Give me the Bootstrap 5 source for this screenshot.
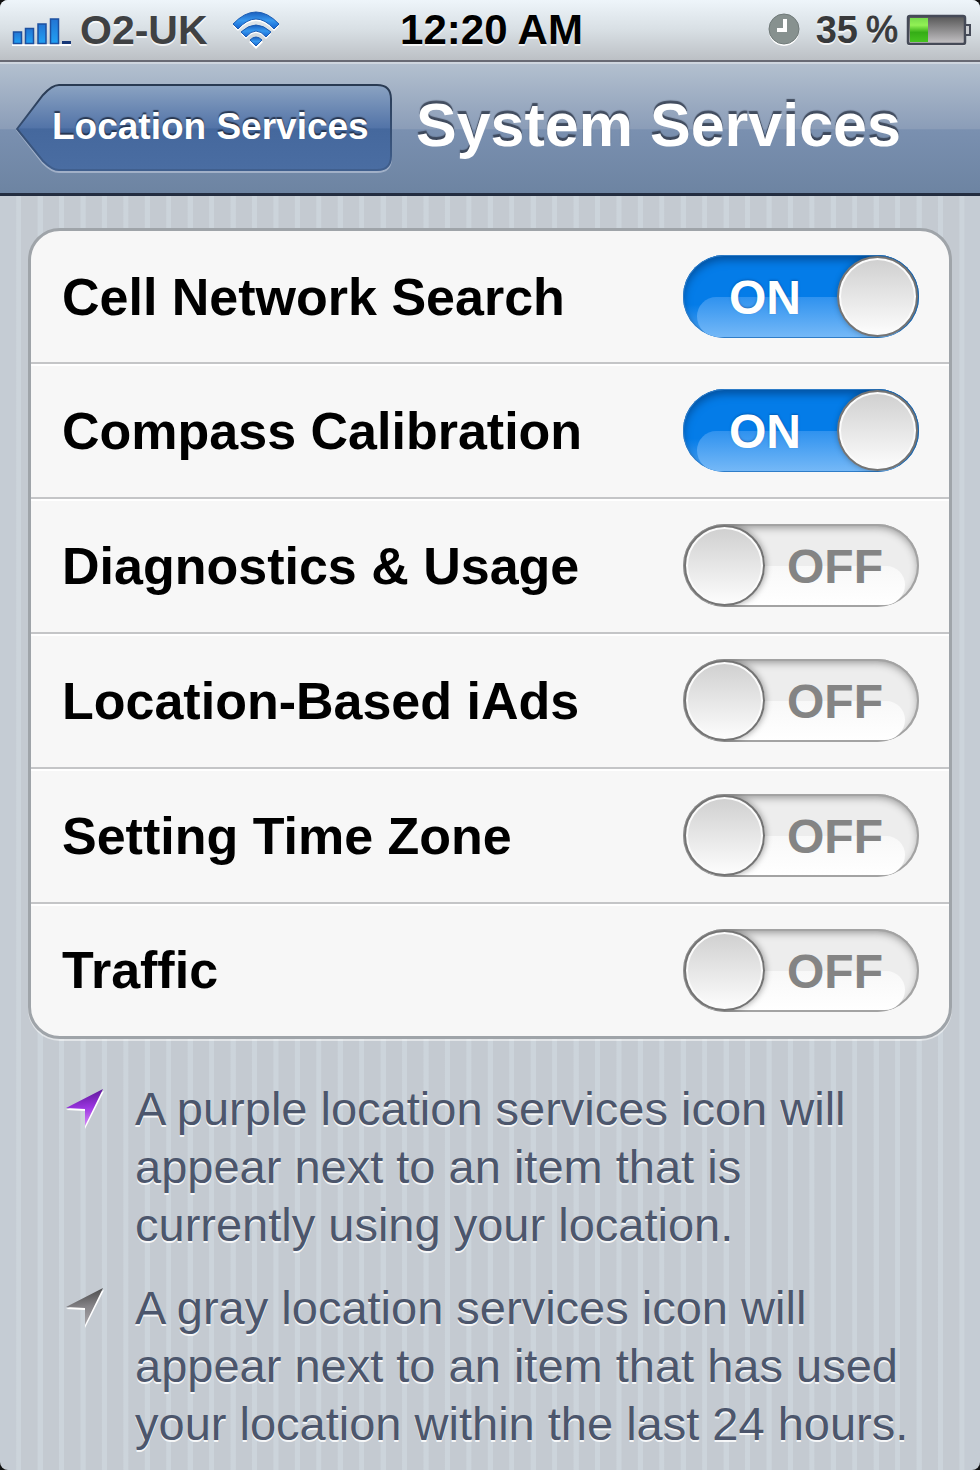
<!DOCTYPE html>
<html lang="en">
<head>
<meta charset="utf-8">
<meta name="viewport" content="width=device-width, initial-scale=1">
<title>System Services</title>
<link rel="stylesheet" href="https://cdn.jsdelivr.net/npm/bootstrap@5.3.0/dist/css/bootstrap.min.css">
<style>
body { background: #111; font-family: "Liberation Sans", Arial, sans-serif; color: #000; }
.screen {
  border-radius: 8px; overflow: hidden;
  background: linear-gradient(90deg, #c5ccd4 16px, transparent 16px calc(100% - 15px), #c5ccd4 calc(100% - 15px)),
    repeating-linear-gradient(90deg, #c4cad1 0 1.6%, #ccd4db 1.7% 2.15%, #c4cad1 2.1875%);
}
.status-bar {
  height: 62px; padding: 0 9px 0 12px; font-weight: 700; line-height: 62px;
  background: linear-gradient(#eef5fa, #d8dfe4 50%, #bcc0c5);
  border-bottom: 2px solid #686a74; text-shadow: 0 2px 0 rgba(255,255,255,.75);
}
.status-side { flex: 1 1 0; }
.carrier { font-size: 41px; color: #3f4143; }
.clock { font-size: 42px; }
.battery-text { font-size: 38px; color: #38393b; }
.percent { font-size: 36px; font-weight: 400; -webkit-text-stroke: 1px #38393b; }
.title-bar {
  height: 134px; padding: 19px 16px 0;
  background: linear-gradient(#b3c0cf, #8b9db8 50%, #7a90b0 51%, #6d84a2);
  border-top: 2px solid #cfd6df; border-bottom: 3px solid #232d40;
}
.back-link {
  width: 376px; height: 90px; padding-left: 36px; padding-bottom: 2px; color: #fff; font-size: 37px; font-weight: 700;
  text-decoration: none; text-shadow: 0 -2px 1px rgba(32,44,66,.85);
}
.back-link:hover { color: #fff; }
.screen-title { font-size: 61px; font-weight: 700; line-height: 84px; color: #fff; text-shadow: 0 -3px 1px rgba(50,60,78,.85); }
.settings {
  margin: 32px 28px 0; border: 3px solid #9fa4a9; border-radius: 32px; background: #f7f7f7;
  overflow: hidden; box-shadow: 0 2px 0 rgba(255,255,255,.5);
}
.setting { height: 135px; padding: 0 30px 0 31px; border-top: 2px solid #c4c5c7; box-shadow: inset 0 2px 0 #fff; }
.setting:first-child { height: 131px; border-top: 0; box-shadow: none; }
.setting:last-child { height: 134px; }
.setting-name { font-size: 52px; font-weight: 700; line-height: 60px; }
.toggle { width: 236px; height: 83px; }
.toggle input {
  appearance: none; display: block; width: 100%; height: 100%; margin: 0; border-radius: 42px; overflow: hidden;
  position: relative; background: #ededed; box-shadow: inset 0 0 0 2px #a3a3a3, inset 0 3px 8px #8c8c8c;
}
.toggle input::before {
  content: ""; position: absolute; left: 14px; right: 14px; top: 42px; height: 39px;
  border-radius: 26px 26px 28px 28px; background: linear-gradient(#f8f8f8, #fff);
}
.toggle input::after {
  content: ""; position: absolute; top: 1px; left: 1px; width: 81px; height: 81px; border-radius: 50%;
  border: 2px solid #747474; background: linear-gradient(#cfcfcf, #fdfdfd);
  box-shadow: inset 0 0 0 2px #fbfbfb, 1px 0 6px rgba(0,0,0,.35);
}
.toggle input:checked { background: linear-gradient(#047ce8 60%, #5aaaf5); box-shadow: inset 0 0 0 1px #2f7dc8, inset 0 5px 8px #03509d; }
.toggle input:checked::before { height: 40px; background: linear-gradient(#2f92ef, #74b8f7); border-radius: 26px 26px 28px 28px; }
.toggle input:checked::after { left: auto; right: 1px; }
.toggle-text {
  position: absolute; top: 0; left: 104px; font-size: 48px; font-weight: 700; line-height: 86px; color: #848484; pointer-events: none;
}
.toggle input:checked + .toggle-text { left: 46px; color: #fff; text-shadow: 0 -1px 2px rgba(0,60,130,.5); }
.notes { padding: 41px 66px 14px 65px; font-size: 47px; line-height: 58px; color: #4c566c; text-shadow: 0 2px 0 rgba(255,255,255,.85); }
.note-icon { margin-top: 9px; margin-right: 29px; }
.note + .note { margin-top: 25px; }
</style>
</head>
<body>
<div class="screen min-vh-100">
  <header>
    <div class="status-bar d-flex align-items-center">
      <div class="status-side d-flex align-items-center">
        <svg width="60" height="32" viewBox="0 -4 60 32" class="flex-shrink-0" aria-label="Signal strength">
          <defs><linearGradient id="sig" x1="0" x2="0" y1="0" y2="1"><stop offset="0" stop-color="#2374d2"/><stop offset="1" stop-color="#20a1f5"/></linearGradient></defs>
          <path d="M0 27H59" stroke="#fff" stroke-width="2"/>
          <g fill="url(#sig)" stroke="#1d50a0" stroke-width="1.5">
            <rect x="1.5" y="14" width="8" height="11.5"/><rect x="13.5" y="10.5" width="8" height="15"/>
            <rect x="26" y="6" width="8" height="19.5"/><rect x="38.5" y="1" width="8" height="24.5"/>
          </g>
          <path d="M50 24.500h9" stroke="#173878" stroke-width="3"/>
        </svg>
        <span class="carrier ms-2">O2-UK</span>
        <svg class="ms-4 flex-shrink-0" width="48" height="38" viewBox="0 0 48 38" aria-label="Wi-Fi">
          <defs><linearGradient id="wifi" x1="0" x2="0" y1="0" y2="1"><stop offset="0" stop-color="#1b5fbd"/><stop offset=".5" stop-color="#3798ef"/><stop offset="1" stop-color="#1261cf"/></linearGradient></defs>
          <path fill="#fff" transform="translate(0 2)" d="M1 13Q24-11 47 13L42 18Q24-2 6 18ZM9 21Q24 7 39 21L34 26Q24 14 14 26ZM17 29Q24 23 31 29L24 36Z"/>
          <g fill="url(#wifi)" stroke="#1c5cb2"><path d="M1 13Q24-11 47 13L42 18Q24-2 6 18Z"/><path d="M9 21Q24 7 39 21L34 26Q24 14 14 26Z"/><path d="M18 29Q24 23 30 29L24 35Z"/></g>
        </svg>
      </div>
      <time class="clock">12:20 AM</time>
      <div class="status-side d-flex align-items-center justify-content-end">
        <svg width="32" height="34" viewBox="0 0 32 34" class="flex-shrink-0" aria-label="Alarm">
          <circle cx="16" cy="18" r="15" fill="#fff"/><circle cx="16" cy="16" r="15" fill="#87918f" stroke="#707a79"/>
          <path d="M17 6V17H9" fill="none" stroke="#fff" stroke-width="4"/>
        </svg>
        <span class="battery-text ms-3">35</span><span class="battery-text percent ms-2">%</span>
        <svg class="ms-2 flex-shrink-0" width="65" height="34" viewBox="0 0 65 34" aria-label="Battery">
          <defs>
            <linearGradient id="bat" x1="0" x2="0" y1="0" y2="1"><stop offset="0" stop-color="#555"/><stop offset="1" stop-color="#c6c4c7"/></linearGradient>
            <linearGradient id="charge" x1="0" x2="0" y1="0" y2="1"><stop offset="0" stop-color="#78dc4c"/><stop offset=".3" stop-color="#92f155"/><stop offset=".6" stop-color="#35ad16"/><stop offset="1" stop-color="#47c321"/></linearGradient>
          </defs>
          <rect x="2" y="4" width="57" height="29" rx="2" fill="#fff"/>
          <rect x="2" y="3" width="57" height="28" rx="2" fill="url(#bat)" stroke="#454a57" stroke-width="2.500"/>
          <rect x="4" y="5" width="18" height="24" fill="url(#charge)"/>
          <path d="M60 12h4v10h-4" fill="#c9ccd0" stroke="#454a57" stroke-width="2"/>
        </svg>
      </div>
    </div>
    <nav class="title-bar d-flex align-items-start">
      <a href="#" class="back-link position-relative d-flex align-items-center flex-shrink-0">
        <svg class="position-absolute top-0 start-0 w-100 h-100" viewBox="0 0 376 90" preserveAspectRatio="none" aria-hidden="true">
          <defs><linearGradient id="back" x1="0" x2="0" y1="0" y2="1"><stop offset="0" stop-color="#8ba3c2"/><stop offset=".5" stop-color="#5374a8"/><stop offset=".52" stop-color="#45689d"/><stop offset="1" stop-color="#4a6da2"/></linearGradient>
          <linearGradient id="edge" x1="0" x2="0" y1="0" y2="1"><stop offset="0" stop-color="#293a52"/><stop offset="1" stop-color="#405f8e"/></linearGradient></defs>
          <path d="M1 47L27 13Q36 3 43 3H361Q375 3 375 17V75Q375 89 361 89H43Q36 89 27 80Z" fill="none" stroke="#a1b0c8" stroke-width="2"/>
          <path d="M1 46L27 12Q36 2 43 2H361Q375 2 375 16V73Q375 87 361 87H43Q36 87 27 78Z" fill="url(#back)" stroke="url(#edge)" stroke-width="2"/>
        </svg>
        <span class="position-relative">Location Services</span>
      </a>
      <h1 class="screen-title mb-0 ms-4 text-nowrap">System Services</h1>
    </nav>
  </header>
  <main>
    <div class="settings">
      <div class="setting d-flex align-items-center justify-content-between">
        <label class="setting-name" for="cell">Cell Network Search</label>
        <div class="toggle position-relative"><input type="checkbox" role="switch" id="cell" checked><span class="toggle-text">ON</span></div>
      </div>
      <div class="setting d-flex align-items-center justify-content-between">
        <label class="setting-name" for="compass">Compass Calibration</label>
        <div class="toggle position-relative"><input type="checkbox" role="switch" id="compass" checked><span class="toggle-text">ON</span></div>
      </div>
      <div class="setting d-flex align-items-center justify-content-between">
        <label class="setting-name" for="diagnostics">Diagnostics &amp; Usage</label>
        <div class="toggle position-relative"><input type="checkbox" role="switch" id="diagnostics"><span class="toggle-text">OFF</span></div>
      </div>
      <div class="setting d-flex align-items-center justify-content-between">
        <label class="setting-name" for="iads">Location-Based iAds</label>
        <div class="toggle position-relative"><input type="checkbox" role="switch" id="iads"><span class="toggle-text">OFF</span></div>
      </div>
      <div class="setting d-flex align-items-center justify-content-between">
        <label class="setting-name" for="timezone">Setting Time Zone</label>
        <div class="toggle position-relative"><input type="checkbox" role="switch" id="timezone"><span class="toggle-text">OFF</span></div>
      </div>
      <div class="setting d-flex align-items-center justify-content-between">
        <label class="setting-name" for="traffic">Traffic</label>
        <div class="toggle position-relative"><input type="checkbox" role="switch" id="traffic"><span class="toggle-text">OFF</span></div>
      </div>
    </div>
    <div class="notes">
      <div class="note d-flex align-items-start">
        <svg class="note-icon flex-shrink-0" width="41" height="42" viewBox="0 0 41 42" aria-hidden="true">
          <defs><linearGradient id="purple" x1=".5" x2=".6" y1="0" y2="1"><stop offset="0" stop-color="#5b1594"/><stop offset=".5" stop-color="#9a35e0"/><stop offset="1" stop-color="#d98cf8"/></linearGradient></defs>
          <path d="M1 21L39 2L20 40V22Z" fill="#fff"/><path d="M1 19L38 0L20 37V20Z" fill="url(#purple)"/>
        </svg>
        <p class="mb-0">A purple location services icon will appear next to an item that is currently using your location.</p>
      </div>
      <div class="note d-flex align-items-start">
        <svg class="note-icon flex-shrink-0" width="41" height="42" viewBox="0 0 41 42" aria-hidden="true">
          <defs><linearGradient id="gray" x1=".5" x2=".6" y1="0" y2="1"><stop offset="0" stop-color="#484848"/><stop offset=".5" stop-color="#858387"/><stop offset="1" stop-color="#aaa8ac"/></linearGradient></defs>
          <path d="M1 21L39 2L20 40V22Z" fill="#fff"/><path d="M1 19L38 0L20 37V20Z" fill="url(#gray)"/>
        </svg>
        <p class="mb-0">A gray location services icon will appear next to an item that has used your location within the last 24 hours.</p>
      </div>
    </div>
  </main>
</div>
<script src="https://cdn.jsdelivr.net/npm/bootstrap@5.3.0/dist/js/bootstrap.bundle.min.js"></script>
</body>
</html>
